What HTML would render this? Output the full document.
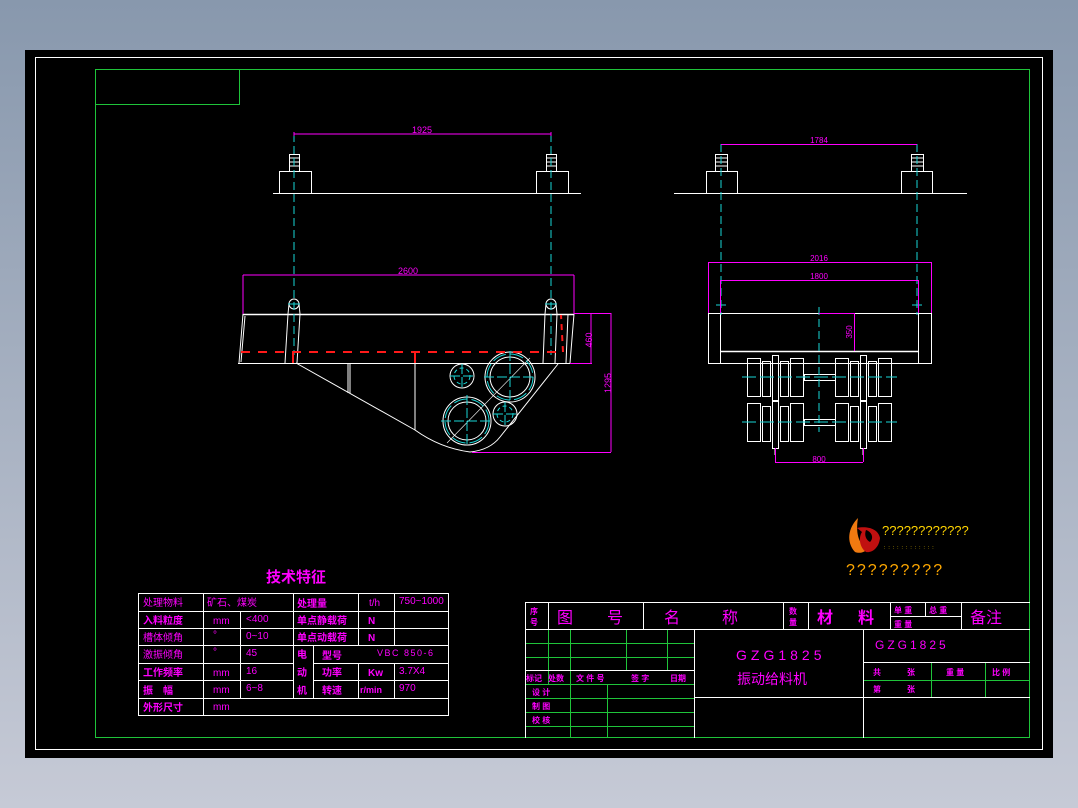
<!DOCTYPE html>
<html><head><meta charset="utf-8"><style>
html,body{margin:0;padding:0;width:1078px;height:808px;overflow:hidden;background:linear-gradient(#8898ad,#c6cad6);}
svg{display:block}
text{font-family:"Liberation Sans","Noto Sans CJK SC",sans-serif;}
</style></head><body>
<svg width="1078" height="808" viewBox="0 0 1078 808" xmlns="http://www.w3.org/2000/svg">
<rect x="25" y="50" width="1028" height="708" fill="#000"/>
<rect x="35.5" y="57.5" width="1007" height="692" fill="none" stroke="#fff" stroke-width="1"/>
<rect x="95.5" y="69.5" width="934" height="668" fill="none" stroke="#1fc43a" stroke-width="1"/>
<polyline points="95.5,104.5 239.5,104.5 239.5,69.5" fill="none" stroke="#1fc43a"/>

<!-- LEFT VIEW -->
<g fill="none" stroke="#fff" stroke-width="1">
<line x1="273" y1="193.5" x2="581" y2="193.5"/>
<rect x="279.5" y="171.5" width="32" height="22"/><rect x="536.5" y="171.5" width="32" height="22"/>
<rect x="289.5" y="154.5" width="10" height="17"/><rect x="546.5" y="154.5" width="10" height="17"/>
<path d="M290 158h10M290 162h10M290 166h10M547 158h10M547 162h10M547 166h10"/>
<line x1="243" y1="314.5" x2="574" y2="314.5" stroke-width="1.5"/>
<line x1="238" y1="363.5" x2="570" y2="363.5"/>
<path d="M243 314 L239 363 M245 316 L241 362"/>
<path d="M288 314 L285 363 M300 314 L297 363 M545 314 L543 363 M557 314 L555 363 M568 314 L566 363 M574 314 L570 363"/>
<circle cx="294" cy="304" r="5"/><circle cx="551" cy="304" r="5"/>
<path d="M289 304 L288 314 M299 304 L300 314 M546 304 L545 314 M556 304 L557 314"/>
<path d="M296 363 L415 430 Q440 448 470 452 Q490 450 500 437 L558 364"/>
<path d="M348 363 V393 M350 363 V393 M415 363 V430"/>
<circle cx="510" cy="377" r="25"/><circle cx="510" cy="377" r="20"/>
<circle cx="467" cy="421" r="24"/><circle cx="467" cy="421" r="19"/>
<circle cx="462" cy="376" r="12"/><circle cx="505" cy="414" r="12"/>
<line x1="447" y1="443" x2="530" y2="358" stroke-width="0.6"/>
</g>
<g fill="none" stroke="#19d6d6" stroke-width="1">
<path d="M294 134 V355 M551 134 V355" stroke-dasharray="8,4"/>
<path d="M288 304h12M545 304h12"/>
<path d="M484 377h52M510 351v52M441 421h52M467 395v52M450 376h24M462 364v24M493 414h24M505 402v24" stroke-dasharray="10,3"/>
<circle cx="510" cy="377" r="23" stroke-dasharray="14,4"/><circle cx="467" cy="421" r="22" stroke-dasharray="14,4"/>
<circle cx="462" cy="376" r="8" stroke-dasharray="4,3"/><circle cx="505" cy="414" r="8" stroke-dasharray="4,3"/>
</g>
<g stroke="#ff1a1a" stroke-width="2" fill="none">
<path d="M241 352 H560" stroke-dasharray="9,8"/>
<path d="M563 352 L561 315" stroke-dasharray="6,5"/>
<path d="M293 352 V363 M415 352 V363"/>
</g>
<g stroke="#ff00ff" stroke-width="1" fill="none">
<path d="M294 134 H551 M294 132 v4 M551 132 v4"/>
<path d="M243 275 H574 M243 275 V314 M574 275 V314"/>
<path d="M574 313.5 H592 M591 313 V363 M570 363.5 H592"/>
<path d="M574 313.5 H611 M611 313 V452 M472 452.5 H611"/>
</g>
<g fill="#ff00ff" font-size="9">
<text x="422" y="133" text-anchor="middle">1925</text>
<text x="408" y="274" text-anchor="middle">2600</text>
<text transform="translate(592,340) rotate(-90)" text-anchor="middle">460</text>
<text transform="translate(611,383) rotate(-90)" text-anchor="middle">1295</text>
</g>

<!-- RIGHT VIEW -->
<g fill="none" stroke="#fff" stroke-width="1">
<line x1="674" y1="193.5" x2="967" y2="193.5"/>
<rect x="706.5" y="171.5" width="31" height="22"/><rect x="901.5" y="171.5" width="31" height="22"/>
<rect x="715.5" y="154.5" width="12" height="17"/><rect x="911.5" y="154.5" width="12" height="17"/>
<path d="M716 158h12M716 162h12M716 166h12M912 158h12M912 162h12M912 166h12"/>
<rect x="708.5" y="313.5" width="223" height="50"/>
<path d="M720.5 313 V363 M918.5 313 V363"/>
<line x1="720" y1="351.5" x2="918" y2="351.5" stroke-width="1.5"/>
<g id="wg">
<rect x="747.5" y="358.5" width="13" height="38"/><rect x="762.5" y="361.5" width="8" height="35"/>
<rect x="772.5" y="355.5" width="6" height="46"/><rect x="780.5" y="361.5" width="8" height="35"/><rect x="790.5" y="358.5" width="13" height="38"/>
<rect x="747.5" y="403.5" width="13" height="38"/><rect x="762.5" y="406.5" width="8" height="35"/>
<rect x="772.5" y="400.5" width="6" height="48"/><rect x="780.5" y="406.5" width="8" height="35"/><rect x="790.5" y="403.5" width="13" height="38"/>
</g>
<use href="#wg" x="88"/>
<rect x="804.5" y="374.5" width="31" height="6"/><rect x="804.5" y="419.5" width="31" height="6"/>
<path d="M775 448V455M863 448V455"/>
</g>
<g fill="none" stroke="#19d6d6" stroke-width="1">
<path d="M721 144 V315 M917 144 V315 M819 307 V432" stroke-dasharray="8,4"/>
<path d="M742 377h155M742 422h155" stroke-dasharray="14,4"/>
<path d="M716 305h10M912 305h10"/>
</g>
<g stroke="#ff00ff" stroke-width="1" fill="none">
<path d="M721 144.5 H917"/>
<path d="M708 262.5 H931 M708.5 262 V313 M931.5 262 V313"/>
<path d="M720 280.5 H918 M720.5 280 V313 M918.5 280 V313"/>
<path d="M819 313.5 H854 M854.5 313 V351"/>
<path d="M775 462.5 H863 M775.5 448 V462 M863.5 448 V462"/>
</g>
<g fill="#ff00ff" font-size="8">
<text x="819" y="143" text-anchor="middle">1784</text>
<text x="819" y="261" text-anchor="middle">2016</text>
<text x="819" y="279" text-anchor="middle">1800</text>
<text transform="translate(852,332) rotate(-90)" text-anchor="middle">350</text>
<text x="819" y="462" text-anchor="middle">800</text>
</g>

<!-- LOGO -->
<path d="M858 518 C848 528 846 542 855 552 C860 554 866 552 868 548 C860 546 855 535 858 518Z" fill="#f07a10"/>
<path d="M857 528 C866 526 878 528 880 538 C879 548 872 553 866 552 C860 548 858 538 862 532Z" fill="#c01010"/>
<path d="M866 530 C872 532 874 538 870 542 C866 540 864 535 866 530Z" fill="#000"/>
<g fill="#ffd400">
<text x="882" y="535" font-size="13">????????????</text>
<text x="884" y="549" font-size="5" letter-spacing="3">::::::::::::</text>
<text x="846" y="575" font-size="16" fill="#ffa800" letter-spacing="2">?????????</text>
</g>

<!-- TECH TABLE -->
<text x="296" y="582" fill="#ff00ff" font-size="15" font-weight="bold" text-anchor="middle">技术特征</text>
<g fill="none" stroke="#fff" stroke-width="1">
<rect x="138.5" y="593.5" width="310" height="122"/>
<path d="M138 611.5H448M138 628.5H448M138 645.5H448M138 663.5H293M313 663.5H448M138 680.5H293M313 680.5H448M138 698.5H448"/>
<path d="M203.5 593V716M240.5 611V698M293.5 593V698M358.5 593V646M358.5 663V698M394.5 593V646M394.5 663V698M313.5 646V698"/>
</g>
<g fill="#ff00ff" font-size="10">
<text x="143" y="606">处理物料</text><text x="207" y="606">矿石、煤炭</text><text x="297" y="607" font-weight="bold">处理量</text><text x="369" y="606">t/h</text><text x="399" y="604">750~1000</text>
<text x="143" y="624" font-weight="bold">入料粒度</text><text x="213" y="624">mm</text><text x="246" y="622">&lt;400</text><text x="297" y="624" font-weight="bold">单点静载荷</text><text x="368" y="624" font-weight="bold">N</text>
<text x="143" y="641">槽体倾角</text><text x="213" y="638">°</text><text x="246" y="639">0~10</text><text x="297" y="641" font-weight="bold">单点动载荷</text><text x="368" y="641" font-weight="bold">N</text>
<text x="143" y="658">激振倾角</text><text x="213" y="655">°</text><text x="246" y="656">45</text><text x="297" y="658" font-weight="bold">电</text><text x="322" y="659" font-weight="bold">型号</text><text x="377" y="656" font-size="9" letter-spacing="1.5">VBC 850-6</text>
<text x="143" y="676" font-weight="bold">工作频率</text><text x="213" y="676">mm</text><text x="246" y="674">16</text><text x="297" y="676" font-weight="bold">动</text><text x="322" y="676" font-weight="bold">功率</text><text x="368" y="676" font-weight="bold">Kw</text><text x="399" y="674">3.7X4</text>
<text x="143" y="694" font-weight="bold">振　幅</text><text x="213" y="693">mm</text><text x="246" y="691">6~8</text><text x="297" y="694" font-weight="bold">机</text><text x="322" y="694" font-weight="bold">转速</text><text x="360" y="693" font-weight="bold" font-size="9">r/min</text><text x="399" y="691">970</text>
<text x="143" y="711" font-weight="bold">外形尺寸</text><text x="213" y="710">mm</text>
</g>

<!-- TITLE BLOCK -->
<g fill="none" stroke="#1fc43a" stroke-width="1">
<path d="M525 643.5H694M525 657.5H694M525 684.5H694M525 698.5H694M525 712.5H694M525 726.5H694"/>
<path d="M548.5 629V684M570.5 629V738M626.5 629V671M667.5 629V671M607.5 684V738"/>
<path d="M863 680.5H1030M931.5 662V697M985.5 662V697"/>
</g>
<g fill="none" stroke="#fff" stroke-width="1">
<path d="M525.5 602V738M525 602.5H1030M525 629.5H1030M694.5 629V738M863.5 629V738M694 697.5H1030M863 662.5H1030M525 670.5H694"/>
<path d="M548.5 602V629M643.5 602V629M783.5 602V629M808.5 602V629M890.5 602V629M925.5 602V616M961.5 602V629M890 616.5H961"/>
</g>
<g fill="#ff00ff">
<text x="530" y="614" font-size="8" font-weight="bold">序</text><text x="530" y="625" font-size="8" font-weight="bold">号</text>
<text x="557" y="623" font-size="16">图</text><text x="607" y="623" font-size="16">号</text>
<text x="664" y="623" font-size="16">名</text><text x="722" y="623" font-size="16">称</text>
<text x="789" y="614" font-size="8" font-weight="bold">数</text><text x="789" y="625" font-size="8" font-weight="bold">量</text>
<text x="817" y="623" font-size="16" font-weight="bold">材</text><text x="858" y="623" font-size="16" font-weight="bold">料</text>
<text x="894" y="613" font-size="8" font-weight="bold">单 重</text><text x="929" y="613" font-size="8" font-weight="bold">总 重</text><text x="894" y="627" font-size="8" font-weight="bold">重 量</text>
<text x="970" y="623" font-size="16">备注</text>
<text x="736" y="660" font-size="14" letter-spacing="4">GZG1825</text>
<text x="737" y="684" font-size="14">振动给料机</text>
<text x="875" y="649" font-size="12" letter-spacing="3">GZG1825</text>
<text x="873" y="675" font-size="8" font-weight="bold">共</text><text x="907" y="675" font-size="8" font-weight="bold">张</text>
<text x="946" y="675" font-size="8" font-weight="bold">重 量</text><text x="992" y="675" font-size="8" font-weight="bold">比 例</text>
<text x="873" y="692" font-size="8" font-weight="bold">第</text><text x="907" y="692" font-size="8" font-weight="bold">张</text>
<g font-size="8" font-weight="bold">
<text x="526" y="681">标记</text><text x="548" y="681">处数</text><text x="576" y="681">文 件 号</text><text x="631" y="681">签 字</text><text x="670" y="681">日期</text>
<text x="532" y="695">设 计</text><text x="532" y="709">制 图</text><text x="532" y="723">校 核</text>
</g>
</g>
</svg>
</body></html>
